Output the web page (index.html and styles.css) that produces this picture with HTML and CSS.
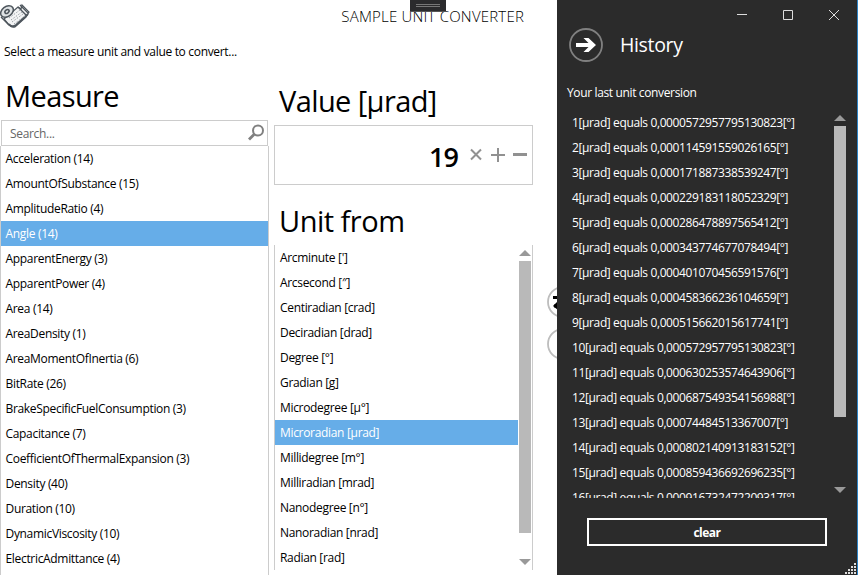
FILE: index.html
```html
<!DOCTYPE html>
<html lang="en">
<head>
<meta charset="utf-8">
<title>Sample Unit Converter</title>
<link rel="stylesheet" href="styles.css">
</head>
<body>
<div class="window">
  <main class="converter">
    <header class="titlebar">
      <svg class="logo" width="32" height="30" viewBox="0 0 32 30">
        <g fill="none" stroke="#4e565d">
          <path d="M4 18 18 6 21 8 22 4 29 11 26 16 15 26Q12 27 9 24Z" fill="#f3f4f5" stroke-width="1.2"/>
          <path d="M9 23Q12 27 16 24L28 13" stroke-width="1.8"/>
          <ellipse cx="7" cy="10.500" rx="7" ry="5" transform="rotate(-38 7 10.500)" fill="#dfe3e5" stroke-width="1.500"/>
          <ellipse cx="7" cy="10.500" rx="2.300" ry="1.600" transform="rotate(-38 7 10.500)" stroke-width="1.600"/>
          <path d="M1 16 9 24M18 6l8 8M20 4l8 8" stroke-width="1.400"/>
          <path d="M9 17 20 9M11 19 22 11M12 21 23 13M14 23 25 15" stroke="#9aa1a6" stroke-dasharray="1.500 1.500"/>
        </g>
      </svg>
      <span class="app-title">SAMPLE UNIT CONVERTER</span>
      <span class="handle"></span>
    </header>
    <p class="intro">Select a measure unit and value to convert...</p>
    <div class="columns">
      <section class="measure">
        <h1 class="measure-title">Measure</h1>
        <div class="search"><span>Search...</span>
          <svg width="18" height="18" viewBox="0 0 18 18" fill="none" stroke="#808080"><circle cx="11" cy="6.500" r="5" stroke-width="2"/><path d="M7.500 10 2 15.500" stroke-width="2.800"/></svg>
        </div>
        <ul class="list measure-list">
          <li>Acceleration (14)</li><li>AmountOfSubstance (15)</li><li>AmplitudeRatio (4)</li><li class="selected">Angle (14)</li><li>ApparentEnergy (3)</li><li>ApparentPower (4)</li><li>Area (14)</li><li>AreaDensity (1)</li><li>AreaMomentOfInertia (6)</li><li>BitRate (26)</li><li>BrakeSpecificFuelConsumption (3)</li><li>Capacitance (7)</li><li>CoefficientOfThermalExpansion (3)</li><li>Density (40)</li><li>Duration (10)</li><li>DynamicViscosity (10)</li><li>ElectricAdmittance (4)</li>
        </ul>
      </section>
      <section class="value">
        <h1 class="value-title">Value [µrad]</h1>
        <div class="value-box"><span class="number">19</span>
          <svg width="60" height="20" viewBox="0 0 60 20" fill="none" stroke="#919191"><path d="M3 4.500 13 14.500M13 4.500 3 14.500" stroke-width="2"/><path d="M23 10H37M30 3V17" stroke-width="2"/><path d="M45 9.500H59" stroke-width="3"/></svg>
        </div>
        <h1 class="unit-title">Unit from</h1>
        <div class="unit-box">
          <ul class="list unit-list">
            <li>Arcminute [']</li><li>Arcsecond [″]</li><li>Centiradian [crad]</li><li>Deciradian [drad]</li><li>Degree [°]</li><li>Gradian [g]</li><li>Microdegree [µ°]</li><li class="selected">Microradian [µrad]</li><li>Millidegree [m°]</li><li>Milliradian [mrad]</li><li>Nanodegree [n°]</li><li>Nanoradian [nrad]</li><li>Radian [rad]</li>
          </ul>
          <div class="scrollbar unit-scroll"><i class="up"></i><b></b><i class="down"></i></div>
        </div>
      </section>
      <div class="swap">
        <svg width="32" height="32" viewBox="0 0 32 32"><circle cx="16" cy="16" r="15" fill="#fff" stroke="#bdbdbd" stroke-width="1.800"/><path d="M6 11.500H17M7 20H17" stroke="#000" stroke-width="3"/><path d="M11 15 6 20 11 24Z"/></svg>
        <svg width="32" height="32" viewBox="0 0 32 32"><circle cx="16" cy="16" r="15" fill="#fff" stroke="#bdbdbd" stroke-width="1.800"/></svg>
      </div>
    </div>
  </main>
  <aside class="history">
    <div class="controls">
      <svg width="12" height="12" viewBox="0 0 12 12"><path d="M1 5.500H11"/></svg>
      <svg width="12" height="12" viewBox="0 0 12 12"><path d="M1.500 1.500H10.500V10.500H1.500Z"/></svg>
      <svg width="12" height="12" viewBox="0 0 12 12"><path d="M1 1 11 11M11 1 1 11"/></svg>
    </div>
    <div class="history-head">
      <svg width="34" height="34" viewBox="0 0 34 34"><circle cx="17" cy="17" r="16" fill="none" stroke="#808080" stroke-width="1.800"/><path fill="#fff" d="M7 15H19.500L14.500 10H19.500L27 17 19.500 24H14.500L19.500 19H7Z"/></svg>
      <h2>History</h2>
    </div>
    <p class="last">Your last unit conversion</p>
    <div class="history-body">
      <ul class="list history-list">
        <li>1[µrad] equals 0,0000572957795130823[°]</li><li>2[µrad] equals 0,000114591559026165[°]</li><li>3[µrad] equals 0,000171887338539247[°]</li><li>4[µrad] equals 0,000229183118052329[°]</li><li>5[µrad] equals 0,000286478897565412[°]</li><li>6[µrad] equals 0,000343774677078494[°]</li><li>7[µrad] equals 0,000401070456591576[°]</li><li>8[µrad] equals 0,000458366236104659[°]</li><li>9[µrad] equals 0,000515662015617741[°]</li><li>10[µrad] equals 0,000572957795130823[°]</li><li>11[µrad] equals 0,000630253574643906[°]</li><li>12[µrad] equals 0,000687549354156988[°]</li><li>13[µrad] equals 0,00074484513367007[°]</li><li>14[µrad] equals 0,000802140913183152[°]</li><li>15[µrad] equals 0,000859436692696235[°]</li><li>16[µrad] equals 0,000916732472209317[°]</li>
      </ul>
      <div class="scrollbar history-scroll"><i class="up"></i><b></b><i class="down"></i></div>
    </div>
    <button class="clear" type="button">clear</button>
    <svg class="grip" width="12" height="12" viewBox="0 0 12 12" fill="#ddd"><path d="M9 0h2v2H9zM6 3h2v2H6zM9 3h2v2H9zM3 6h2v2H3zM6 6h2v2H6zM9 6h2v2H9zM0 9h2v2H0zM3 9h2v2H3zM6 9h2v2H6zM9 9h2v2H9z"/></svg>
  </aside>
</div>
</body>
</html>
```

FILE: styles.css
```css
* { box-sizing: border-box; }
body { margin: 0; font-family: "Open Sans", "Noto Sans", sans-serif; font-size: 12px; letter-spacing: -0.32px; color: #000; background: #fff; overflow: hidden; }
h1, h2, p, ul { margin: 0; padding: 0; font-weight: 400; }
ul { list-style: none; }
svg { display: block; flex: none; }
.window { display: flex; width: 858px; height: 575px; overflow: hidden; }
.converter { width: 557px; flex: none; overflow: hidden; }
.titlebar { position: relative; display: flex; justify-content: space-between; height: 32px; padding-right: 33px; }
.logo { margin-top: 1px; }
.app-title { font-size: 15px; line-height: 32px; font-weight: 300; letter-spacing: 0.2px; white-space: nowrap; }
.handle { position: absolute; left: 410px; top: 0; width: 36px; height: 12px; background: linear-gradient(#777 0 1px, transparent 1px 2px, #777 2px 3px) 6px 4px / 24px 3px no-repeat #2b2b2d; border-bottom: 1px solid #555; }
.intro { height: 38px; line-height: 39px; padding-left: 4px; white-space: nowrap; }
.columns { display: flex; height: 505px; }
.columns > * { flex: none; }
h1 { font-size: 29px; line-height: 40px; white-space: nowrap; letter-spacing: -0.6px; }
.measure { width: 269px; }
.measure-title { height: 50px; padding: 6px 0 0 5px; }
.search { display: flex; justify-content: space-between; align-items: center; height: 26px; margin-left: 1px; width: 267px; padding: 0 2px 0 8px; border: 1px solid #ccc; color: #666; }
.list li { height: 25px; line-height: 25px; padding-left: 5px; white-space: nowrap; }
.list .selected { background: #66ade8; color: #fff; }
.measure-list { height: 429px; border: solid #ccc; border-width: 0 1px; }
.measure-list li { padding-left: 4.5px; }
.value { width: 259px; margin-left: 5px; }
.value-title { height: 55px; padding: 11px 0 0 5px; }
.value-box { display: flex; justify-content: flex-end; align-items: center; height: 60px; padding-right: 4px; border: 1px solid #ccc; }
.number { font-size: 27px; font-weight: 600; letter-spacing: -1px; margin-right: 10px; padding-top: 2px; }
.unit-title { height: 60px; padding: 16px 0 0 5px; letter-spacing: -0.5px; }
.unit-box { display: flex; height: 325px; border: solid #ccc; border-width: 0 1px; }
.unit-list { width: 243px; }
.scrollbar { display: flex; flex-direction: column; align-items: center; width: 12px; }
.scrollbar b { width: 12px; background: #b9b9b9; }
.scrollbar i { width: 0; height: 0; border: solid transparent; border-width: 0 6px; }
.scrollbar .up { border-bottom: 6px solid #999; margin-bottom: 5px; }
.scrollbar .down { border-top: 6px solid #999; }
.unit-scroll { margin-left: 1px; padding-top: 5px; }
.unit-scroll b { height: 272px; margin-bottom: 26px; }
.swap { display: flex; flex-direction: column; gap: 10px; margin-left: 14px; padding-top: 216px; }
.history { width: 301px; flex: none; position: relative; color: #fff; background: #2b2b2b; border-right: 1px solid #2d83c5; }
.controls { display: flex; height: 28px; gap: 34px; justify-content: flex-end; padding: 9px 17px 0 0; fill: none; stroke: #ddd; }
.history-head { display: flex; align-items: center; gap: 17px; height: 34px; padding-left: 12px; }
h2 { font-size: 19.5px; letter-spacing: -0.35px; margin-top: -2px; }
.last { height: 48px; line-height: 62px; padding-left: 10px; letter-spacing: -0.36px; }
.history-body { display: flex; height: 388px; margin-bottom: 20px; overflow: hidden; }
.history-list { width: 277px; padding-left: 10px; letter-spacing: -0.38px; }
.history-scroll { padding-top: 5px; }
.history-scroll b { height: 291px; margin-bottom: 70px; }
.clear { display: block; width: 240px; height: 28px; margin-left: 30px; padding: 0; border: 2px solid #fff; background: transparent; color: #fff; font: 700 12px "Open Sans", sans-serif; letter-spacing: -0.5px; }
.grip { position: absolute; right: 0; bottom: 0; }
```
